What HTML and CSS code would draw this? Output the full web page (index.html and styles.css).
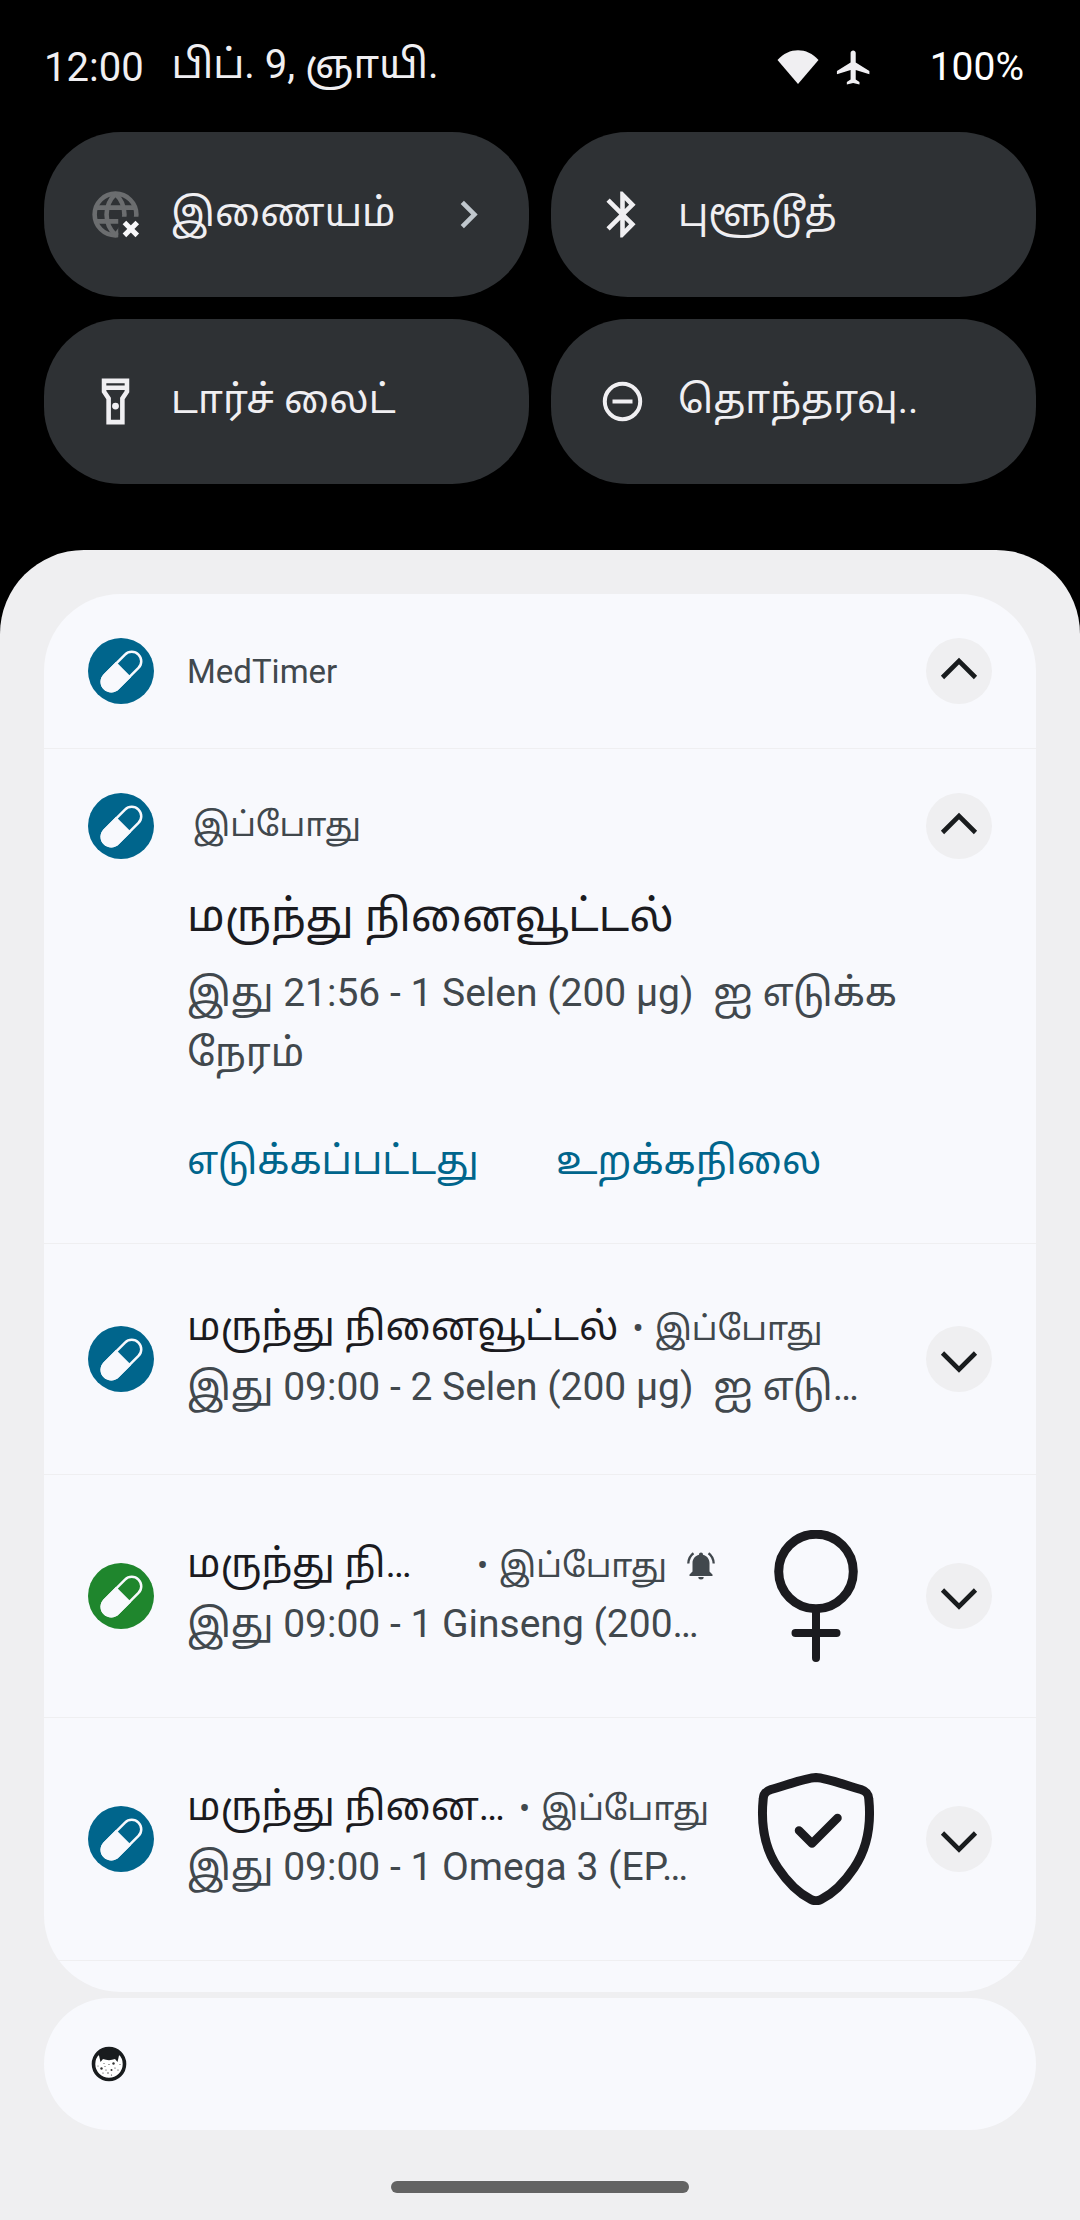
FILE: index.html
```html
<!DOCTYPE html>
<html lang="ta">
<head>
<meta charset="utf-8">
<meta name="viewport" content="width=device-width, initial-scale=1">
<title>MedTimer</title>
<link rel="stylesheet" href="styles.css">
</head>
<body>
<svg class="defs" aria-hidden="true">
  <symbol id="pill" viewBox="0 0 66 66">
    <g transform="translate(33.5 33.5) rotate(-45)">
      <path d="M3 -10.75H-14.5a10.75 10.75 0 0 0 0 21.5H3z" fill="#f8f9fd"/>
      <rect x="-24" y="-9.5" width="48" height="19" rx="9.5" fill="none" stroke="#f8f9fd" stroke-width="2.5"/>
    </g>
  </symbol>
  <symbol id="up" viewBox="0 0 66 66"><path d="M16.500 39.500L33 23l16.500 16.500" fill="none" stroke="#191c1e" stroke-width="4.600"/></symbol>
  <symbol id="down" viewBox="0 0 66 66"><path d="M16.500 27L33 43.500 49.500 27" fill="none" stroke="#191c1e" stroke-width="4.600"/></symbol>
</svg>

<header class="status">
  <time class="clock">12:00</time>
  <span class="date">பிப். 9, ஞாயி.</span>
  <svg class="wifi" viewBox="0 0 42 34" aria-hidden="true"><path d="M0.500 10C12 -3 30 -3 41.500 10L21 34z" fill="#f0eff2"/></svg>
  <svg class="plane" viewBox="0 0 24 24" aria-hidden="true"><path d="M21.300 16v-2l-8-5V3.500c0-.83-.67-1.500-1.500-1.500s-1.500.67-1.500 1.500V9l-8 5v2l8-2.500V19l-2.200 1.500V22l3.700-1 3.700 1v-1.500L13.300 19v-5.500l8 2.500z" fill="#f0eff2"/></svg>
  <span class="battery">100%</span>
</header>

<section class="tiles">
  <button class="tile" type="button">
    <svg class="tile-icon" viewBox="0 0 24 24" aria-hidden="true">
      <clipPath id="cut"><path d="M0 0h24v13H13.200v11H0z"/></clipPath>
      <g clip-path="url(#cut)" fill="none" stroke="#6b6d6f" stroke-width="2">
        <circle cx="12" cy="12" r="9.100"/><path d="M3.500 9h17M3.500 15h17"/><path d="M12 3C6.800 8 6.800 16 12 21M12 3c5.200 5 5.200 13 0 18"/>
      </g>
      <path d="M15.900 15.500l5.600 5.600M21.500 15.500l-5.600 5.600" stroke="#f8f8fa" stroke-width="2.200"/>
    </svg>
    <span class="tile-label">இணையம்</span>
    <svg class="tile-icon" viewBox="0 0 24 24" aria-hidden="true"><path d="M10 6L8.590 7.410 13.170 12l-4.580 4.590L10 18l6-6z" fill="#c0c7cd"/></svg>
  </button>
  <button class="tile" type="button">
    <svg class="tile-icon" viewBox="0 0 24 24" aria-hidden="true"><path d="M17.710 7.710L12 2h-1v7.590L6.410 5 5 6.410 10.590 12 5 17.590 6.410 19 11 14.410V22h1l5.710-5.710-4.300-4.290 4.300-4.290zM13 5.830l1.880 1.880L13 9.590V5.830zm1.880 10.460L13 18.170v-3.760l1.880 1.880z" fill="#f0eff2"/></svg>
    <span class="tile-label">புளூடூத்</span>
  </button>
  <button class="tile" type="button">
    <svg class="tile-icon" viewBox="0 0 24 24" aria-hidden="true"><path fill-rule="evenodd" d="M6 2v6l2 3v11h8V11l2-3V2H6zm10 2v1H8V4h8zm-2 6.400V20h-4v-9.600L8 7.390V7h8v.39l-2 3.010z" fill="#f0eff2"/><circle cx="12" cy="14" r="1.500" fill="#f0eff2"/></svg>
    <span class="tile-label">டார்ச் லைட்</span>
  </button>
  <button class="tile" type="button">
    <svg class="tile-icon" viewBox="0 0 55 55" aria-hidden="true"><circle cx="27.500" cy="27.500" r="17.700" fill="none" stroke="#f0eff2" stroke-width="4"/><path d="M17.500 27.500h20" stroke="#f0eff2" stroke-width="4"/></svg>
    <span class="tile-label">தொந்தரவு..</span>
  </button>
</section>

<main class="shade">
  <section class="card">
    <header class="row row-head">
      <svg class="badge" aria-hidden="true"><use href="#pill"/></svg>
      <span class="app">MedTimer</span>
      <button class="toggle" type="button" aria-label="சுருக்கு"><svg aria-hidden="true"><use href="#up"/></svg></button>
    </header>

    <article class="row row-open">
      <svg class="badge" aria-hidden="true"><use href="#pill"/></svg>
      <span class="time time-open">இப்போது</span>
      <button class="toggle" type="button" aria-label="சுருக்கு"><svg aria-hidden="true"><use href="#up"/></svg></button>
      <div class="detail">
        <h2 class="title-large">மருந்து நினைவூட்டல்</h2>
        <p class="body">இது 21:56 - 1 Selen (200 µg) &nbsp;ஐ எடுக்க நேரம்</p>
        <div class="actions">
          <button class="action" type="button">எடுக்கப்பட்டது</button>
          <button class="action" type="button">உறக்கநிலை</button>
        </div>
      </div>
    </article>

    <article class="row row-small">
      <svg class="badge" aria-hidden="true"><use href="#pill"/></svg>
      <div class="text">
        <div class="line"><h2 class="title">மருந்து நினைவூட்டல்</h2><span class="dot">•</span><span class="time">இப்போது</span></div>
        <p class="summary">இது 09:00 - 2 Selen (200 µg) &nbsp;ஐ எடு…</p>
      </div>
      <button class="toggle" type="button" aria-label="விரி"><svg aria-hidden="true"><use href="#down"/></svg></button>
    </article>

    <article class="row row-picture">
      <svg class="badge badge-green" aria-hidden="true"><use href="#pill"/></svg>
      <div class="text">
        <div class="line"><h2 class="title title-fill">மருந்து நி…</h2><span class="dot">•</span><span class="time">இப்போது</span>
          <svg class="bell" viewBox="0 0 28 28" aria-hidden="true"><path d="M14 0.500c1.200 0 2 .8 2 2.200 4 1 6.500 4.300 6.500 8.300v8.500l3 3v1.500h-23v-1.500l3-3V11c0-4 2.500-7.300 6.500-8.300 0-1.400.8-2.200 2-2.200zM11.300 25h5.400a2.700 2.500 0 0 1-5.400 0z" fill="#41484d"/><path d="M1.300 11.500C1.500 7 3.500 3.500 6.500 1.300M26.700 11.500C26.500 7 24.500 3.500 21.500 1.300" fill="none" stroke="#41484d" stroke-width="2.300"/></svg>
        </div>
        <p class="summary">இது 09:00 - 1 Ginseng (200…</p>
      </div>
      <svg class="picture" viewBox="0 0 132 132" aria-hidden="true"><g fill="none" stroke="#1b1b1f" stroke-linecap="round"><circle cx="66" cy="41.500" r="37.300" stroke-width="9"/><path d="M66 80v48M45.500 103h41" stroke-width="8"/></g></svg>
      <button class="toggle" type="button" aria-label="விரி"><svg aria-hidden="true"><use href="#down"/></svg></button>
    </article>

    <article class="row row-picture">
      <svg class="badge" aria-hidden="true"><use href="#pill"/></svg>
      <div class="text">
        <div class="line"><h2 class="title">மருந்து நினை…</h2><span class="dot">•</span><span class="time">இப்போது</span></div>
        <p class="summary">இது 09:00 - 1 Omega 3 (EP…</p>
      </div>
      <svg class="picture" viewBox="0 0 132 132" aria-hidden="true"><g fill="none" stroke="#1b1b1f" stroke-linecap="round" stroke-linejoin="round"><path d="M66 4.500C55 5 37 12 21 16.500C15 18.500 13.500 21 13.200 26C11 48 13 73 28 95C38 110 50 121 61 126.500Q66 129 71 126.500C82 121 94 110 104 95C119 73 121 48 118.800 26C118.500 21 117 18.500 111 16.500C95 12 77 5 66 4.500z" stroke-width="9"/><path d="M49 57.500L62 70.500 87.500 45" stroke-width="8.500"/></g></svg>
      <button class="toggle" type="button" aria-label="விரி"><svg aria-hidden="true"><use href="#down"/></svg></button>
    </article>
  </section>

  <section class="card card-silent">
    <svg class="face" viewBox="0 0 36 36" aria-hidden="true"><circle cx="18" cy="18" r="15.500" fill="#fff" stroke="#191c1e" stroke-width="3.600"/><path d="M6 9C12 1 24 1 30 9l-2 .5 -1.500 6.500-2.500-3c-4 1.500-8 1.500-12 0l-2.500 3L8 9.500z" fill="#191c1e"/><g fill="#333"><circle cx="10.500" cy="22.500" r="1.200"/><circle cx="22.500" cy="17.500" r="1.200"/><circle cx="20.500" cy="24" r="1"/><circle cx="15" cy="24" r=".6"/><circle cx="13" cy="17.500" r=".5"/><circle cx="18" cy="18.500" r=".6"/><circle cx="17" cy="27" r=".7"/><circle cx="12" cy="27" r=".6"/><circle cx="24" cy="22" r=".6"/><circle cx="27" cy="24" r=".6"/><circle cx="20.500" cy="29" r=".6"/><circle cx="7" cy="20" r=".5"/><circle cx="29" cy="18.500" r=".5"/><circle cx="14" cy="20.500" r=".5"/></g></svg>
  </section>

  <div class="handle"></div>
</main>
</body>
</html>
```
FILE: styles.css
```css
* { box-sizing: border-box; }

body {
  margin: 0;
  min-height: 100vh;
  display: flex;
  flex-direction: column;
  background: #000;
  color: #1b1b1f;
  font-family: Roboto, "Noto Sans Tamil", "Noto Sans", sans-serif;
  font-size: 39px;
}

h2, p { margin: 0; font-weight: 400; }

button {
  margin: 0;
  padding: 0;
  border: 0;
  background: none;
  color: inherit;
  font: inherit;
  text-align: left;
}

svg { display: block; flex: none; }

.defs { position: absolute; width: 0; height: 0; }

/* Status bar */
.status {
  display: flex;
  align-items: center;
  height: 132px;
  padding: 2px 56px 0 44px;
  color: #f0eff2;
}

.clock, .date { font-size: 40px; }
.date { margin-left: 28px; flex: 1; }
.wifi { width: 42px; height: 34px; }
.plane { width: 41px; height: 41px; margin: 0 56px 0 14px; }
.battery { color: #fff; }

/* Quick settings */
.tiles {
  display: grid;
  grid-template-columns: 1fr 1fr;
  gap: 22px;
  padding: 0 44px;
}

.tile {
  display: flex;
  align-items: center;
  gap: 28px;
  height: 165px;
  padding: 0 33px 0 44px;
  border-radius: 77px;
  background: #2e3134;
  color: #f0eff2;
}

.tile-icon { width: 55px; height: 55px; }
.tile-label { flex: 1; white-space: nowrap; }

/* Notification shade */
.shade {
  flex: 1;
  display: flex;
  flex-direction: column;
  margin-top: 66px;
  padding: 44px 44px 27px;
  border-radius: 84px 84px 0 0;
  background: #efeff1;
}

.card {
  padding-bottom: 31px;
  border-radius: 77px;
  background: #f8f9fd;
}

.row {
  display: grid;
  grid-template-columns: 66px minmax(0, 1fr) 66px;
  column-gap: 33px;
  align-items: center;
  padding: 0 44px;
  border-bottom: 1px solid #efeff1;
}

.row-head { height: 155px; }
.row-open { padding-top: 44px; padding-bottom: 52px; }
.row-small { height: 231px; }
.row-picture {
  height: 243px;
  grid-template-columns: 66px minmax(0, 1fr) 132px 77px;
}
.row-picture .toggle { justify-self: end; }

.badge {
  width: 66px;
  height: 66px;
  border-radius: 50%;
  background: #00658c;
}
.badge-green { background: #1f862d; }

.toggle {
  width: 66px;
  height: 66px;
  border-radius: 50%;
  background: #efeff1;
}
.toggle svg { width: 66px; height: 66px; }

.app, .time, .dot { font-size: 33px; color: #41484d; }
.time-open { padding-left: 6px; }

.detail { grid-column: 2 / 4; padding-top: 24px; }
.title-large { margin-bottom: 14px; font-size: 44px; line-height: 66px; }
.body { line-height: 60px; color: #41484d; }

.actions { display: flex; gap: 77px; margin-top: 48px; }
.action { line-height: 60px; color: #00658c; }

.text { padding-bottom: 4px; }
.line {
  display: flex;
  align-items: baseline;
  height: 60px;
  line-height: 60px;
  white-space: nowrap;
}
.title { font-size: 39px; }
.title-fill { flex: 1; }
.dot { margin: 0 11px 0 14px; }
.bell { align-self: center; width: 28px; height: 28px; margin: 4px 2px 0 20px; }
.summary { line-height: 60px; color: #41484d; white-space: nowrap; }
.picture { width: 132px; height: 132px; }

.card-silent {
  display: flex;
  align-items: center;
  height: 132px;
  margin-top: 6px;
  padding: 0 47px;
}
.face { width: 36px; height: 36px; }

.handle {
  width: 298px;
  height: 12px;
  margin: auto auto 0;
  border-radius: 6px;
  background: #636363;
}
```
